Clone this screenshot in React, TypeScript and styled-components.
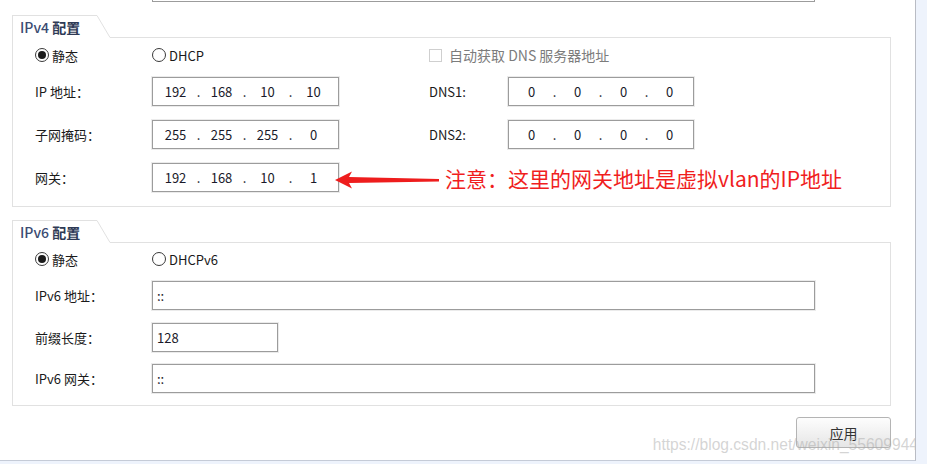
import React from 'react';
import styled, { createGlobalStyle } from 'styled-components';

const GlobalStyle = createGlobalStyle`
  html, body {
    margin: 0;
    padding: 0;
    background: #eef3fc;
  }
  body {
    font-family: "Noto Sans CJK SC", "Noto Sans", sans-serif;
    font-size: 13px;
    color: #1a1a1a;
  }
`;

const Window = styled.div`
  position: relative;
  width: 916px;
  height: 461px;
  box-sizing: border-box;
  padding: 0 24px 0 12px;
  background: #ffffff;
  border-right: 1px solid #b9bcc4;
  border-bottom: 1px solid #c5cbd7;
  overflow: hidden;
`;

const CutField = styled.div`
  margin-left: 140px;
  width: 663px;
  height: 2px;
  box-sizing: border-box;
  border: 1px solid #9c9c9c;
  border-top: none;
`;

const GroupWrap = styled.div<{ $mt: number }>`
  margin-top: ${(p) => p.$mt}px;
`;

const TabRow = styled.div`
  display: flex;
  height: 23px;
`;

const Tab = styled.div`
  width: 85px;
  box-sizing: border-box;
  border-top: 1px solid #e1e1e1;
  border-left: 1px solid #e1e1e1;
  padding: 1px 0 0 7px;
  font-size: 14px;
  font-weight: 700;
  line-height: 21px;
  color: #2e3a55;
  white-space: nowrap;
`;

const TabVersion = styled.span`
  font-weight: 500;
  color: #3b4c72;
`;

const Slant = styled.svg`
  display: block;
  flex: none;
`;

const Rule = styled.div`
  flex: 1;
  border-bottom: 1px solid #e1e1e1;
`;

const Body = styled.div<{ $pt: number; $pb: number }>`
  border: 1px solid #e1e1e1;
  border-top: none;
  padding: ${(p) => p.$pt}px 0 ${(p) => p.$pb}px 22px;
`;

const Row = styled.div<{ $cols: string; $mt?: number }>`
  display: grid;
  grid-template-columns: ${(p) => p.$cols};
  align-items: center;
  margin-top: ${(p) => p.$mt ?? 0}px;
`;

const Label = styled.div`
  white-space: nowrap;
`;

const Choice = styled.label`
  display: flex;
  align-items: center;
  gap: 3px;
  height: 20px;
  white-space: nowrap;
`;

const CheckChoice = styled(Choice)`
  grid-column: 4 / -1;
`;

const RadioDot = styled.span<{ $on?: boolean }>`
  position: relative;
  width: 14px;
  height: 14px;
  box-sizing: border-box;
  border: 1px solid #3a3a3a;
  border-radius: 50%;
  &::after {
    content: '';
    display: ${(p) => (p.$on ? 'block' : 'none')};
    position: absolute;
    left: 2px;
    top: 2px;
    width: 8px;
    height: 8px;
    border-radius: 50%;
    background: #1c1c1c;
  }
`;

const CheckBox = styled.span`
  width: 13px;
  height: 13px;
  box-sizing: border-box;
  border: 1px solid #cfcfcf;
  margin-right: 4px;
`;

const MutedText = styled.span`
  color: #7c7c7c;
  font-size: 14px;
`;

const Field = styled.div<{ $w: number; $h?: number }>`
  width: ${(p) => p.$w}px;
  height: ${(p) => p.$h ?? 29}px;
  box-sizing: border-box;
  border: 1px solid #9c9c9c;
  box-shadow: 0 0 0 1px #ebebeb;
  background: #fff;
  display: flex;
  align-items: center;
  padding-left: 4px;
  font-size: 13px;
  color: #1a1a2a;
`;

const Seg = styled.span`
  width: 37px;
  text-align: center;
`;

const Dot = styled.span`
  width: 9px;
  text-align: center;
`;

const Note = styled.div`
  grid-column: 3 / -1;
  display: flex;
  align-items: center;
  margin-left: -4px;
  white-space: nowrap;
`;

const ArrowSvg = styled.svg`
  display: block;
  flex: none;
  transform: translateY(2px);
`;

const NoteText = styled.span`
  margin-left: 6px;
  font-size: 21px;
  line-height: 24px;
  color: #f01e1e;
`;

const Footer = styled.div`
  display: flex;
  justify-content: flex-end;
  margin-top: 11px;
`;

const ApplyButton = styled.button`
  width: 95px;
  height: 31px;
  border: 1px solid #b4b4b4;
  border-radius: 3px;
  background: linear-gradient(#fdfdfd, #e6e6e6);
  font-family: "Noto Sans CJK SC", sans-serif;
  font-size: 14px;
  line-height: 26px;
  color: #333;
  padding: 0;
`;

const Watermark = styled.div`
  position: absolute;
  right: -3px;
  bottom: 6px;
  font-family: "Liberation Sans", Arial, sans-serif;
  font-size: 15.6px;
  color: rgba(170, 170, 170, 0.5);
  white-space: nowrap;
  pointer-events: none;
`;

const v4Cols = '117px 187px 90px 79px 186px';
const v6Cols = '117px auto';

function IpValue({ parts }: { parts: string[] }) {
  return (
    <>
      {parts.map((p, i) => (
        <React.Fragment key={i}>
          {i > 0 && <Dot>.</Dot>}
          <Seg>{p}</Seg>
        </React.Fragment>
      ))}
    </>
  );
}

function Group({ version, mt, pt, pb, children }: { version: string; mt: number; pt: number; pb: number; children: React.ReactNode }) {
  return (
    <GroupWrap $mt={mt}>
      <TabRow>
        <Tab>
          <TabVersion>{version}</TabVersion> 配置
        </Tab>
        <Slant width="13" height="23" viewBox="0 0 13 23">
          <line x1="0" y1="0.5" x2="13" y2="22.5" stroke="#e1e1e1" strokeWidth="1" />
        </Slant>
        <Rule />
      </TabRow>
      <Body $pt={pt} $pb={pb}>{children}</Body>
    </GroupWrap>
  );
}

function Arrow() {
  return (
    <ArrowSvg width="104" height="20" viewBox="0 0 104 20">
      <polygon points="0,10 17,1.5 14,7 104,9 104,11.5 14,13 17,18.5" fill="#ee1d1d" />
    </ArrowSvg>
  );
}

export default function App() {
  return (
    <>
      <GlobalStyle />
      <Window>
        <CutField />
        <Group version="IPv4" mt={13} pt={7} pb={14}>
          <Row $cols={v4Cols}>
            <Choice><RadioDot $on />静态</Choice>
            <Choice><RadioDot />DHCP</Choice>
            <span />
            <CheckChoice>
              <CheckBox />
              <MutedText>自动获取 DNS 服务器地址</MutedText>
            </CheckChoice>
          </Row>
          <Row $cols={v4Cols} $mt={12}>
            <Label>IP 地址：</Label>
            <Field $w={187}><IpValue parts={['192', '168', '10', '10']} /></Field>
            <span />
            <Label>DNS1:</Label>
            <Field $w={186}><IpValue parts={['0', '0', '0', '0']} /></Field>
          </Row>
          <Row $cols={v4Cols} $mt={14}>
            <Label>子网掩码：</Label>
            <Field $w={187}><IpValue parts={['255', '255', '255', '0']} /></Field>
            <span />
            <Label>DNS2:</Label>
            <Field $w={186}><IpValue parts={['0', '0', '0', '0']} /></Field>
          </Row>
          <Row $cols={v4Cols} $mt={14}>
            <Label>网关：</Label>
            <Field $w={187}><IpValue parts={['192', '168', '10', '1']} /></Field>
            <Note>
              <Arrow />
              <NoteText>注意：这里的网关地址是虚拟vlan的IP地址</NoteText>
            </Note>
          </Row>
        </Group>
        <Group version="IPv6" mt={13} pt={6} pb={12}>
          <Row $cols={v4Cols}>
            <Choice><RadioDot $on />静态</Choice>
            <Choice><RadioDot />DHCPv6</Choice>
          </Row>
          <Row $cols={v6Cols} $mt={12}>
            <Label>IPv6 地址：</Label>
            <Field $w={663}>::</Field>
          </Row>
          <Row $cols={v6Cols} $mt={13}>
            <Label>前缀长度：</Label>
            <Field $w={126}>128</Field>
          </Row>
          <Row $cols={v6Cols} $mt={12}>
            <Label>IPv6 网关：</Label>
            <Field $w={663}>::</Field>
          </Row>
        </Group>
        <Footer>
          <ApplyButton>应用</ApplyButton>
        </Footer>
        <Watermark>https://blog.csdn.net/weixin_55609944</Watermark>
      </Window>
    </>
  );
}
